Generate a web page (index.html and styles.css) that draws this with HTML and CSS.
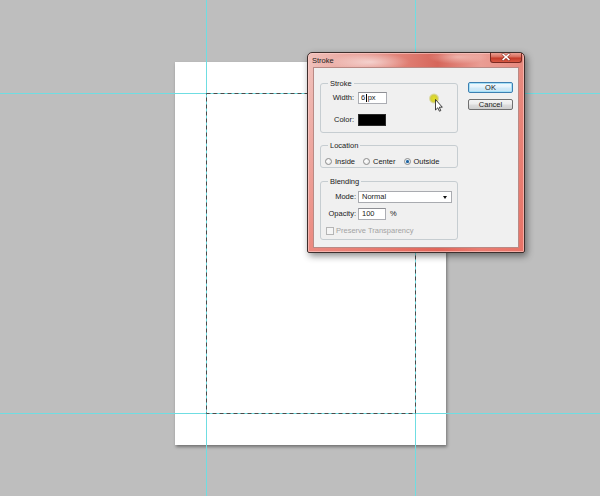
FILE: index.html
```html
<!DOCTYPE html>
<html>
<head>
<meta charset="utf-8">
<title>Stroke</title>
<link rel="stylesheet" href="styles.css">
</head>
<body>
<div class="canvas">
  <div class="doc"></div>
  <svg class="overlay" width="600" height="496" viewBox="0 0 600 496">
    <g stroke="#6fdde2" stroke-width="1">
      <line x1="206.5" y1="0" x2="206.5" y2="496"/>
      <line x1="415.5" y1="0" x2="415.5" y2="496"/>
      <line x1="0" y1="93.5" x2="600" y2="93.5"/>
      <line x1="0" y1="413.5" x2="600" y2="413.5"/>
    </g>
    <rect x="206.5" y="93.5" width="209" height="320" fill="none" stroke="#4b4b4b" stroke-width="1" stroke-dasharray="4 3"/>
  </svg>

  <div class="dialog">
    <div class="titlebar">
      <span class="title">Stroke</span>
      <span class="close">
        <svg width="32" height="10" viewBox="0 0 32 10">
          <path d="M13 2.2 L19 7.6 M19 2.2 L13 7.6" stroke="#6a1a12" stroke-width="2.8" stroke-linecap="round" opacity="0.55"/>
          <path d="M13 2.2 L19 7.6 M19 2.2 L13 7.6" stroke="#ffffff" stroke-width="1.5" stroke-linecap="round"/>
        </svg>
      </span>
    </div>
    <div class="client">
      <div class="groups">
        <fieldset class="group g-stroke">
          <legend>Stroke</legend>
          <div class="rows rows-stroke">
            <span class="lbl">Width:</span>
            <span class="field field-w"><span>6</span><span class="caret"></span><span class="unit">px</span></span>
            <span class="lbl">Color:</span>
            <span class="swatch"></span>
          </div>
        </fieldset>
        <fieldset class="group g-loc">
          <legend>Location</legend>
          <div class="radios">
            <span class="opt"><span class="radio"></span>Inside</span>
            <span class="opt"><span class="radio"></span>Center</span>
            <span class="opt"><span class="radio checked"></span>Outside</span>
          </div>
        </fieldset>
        <fieldset class="group g-blend">
          <legend>Blending</legend>
          <div class="rows rows-blend">
            <span class="lbl">Mode:</span>
            <span class="select"><span>Normal</span><span class="arrow"></span></span>
            <span class="lbl">Opacity:</span>
            <span class="op"><span class="field field-o">100</span><span class="pct">%</span></span>
            <span class="check-row"><span class="checkbox"></span><span class="dis">Preserve Transparency</span></span>
          </div>
        </fieldset>
      </div>
      <div class="buttons">
        <span class="btn btn-default">OK</span>
        <span class="btn">Cancel</span>
      </div>
    </div>
  </div>

  <svg class="cursor" width="16" height="20" viewBox="0 0 16 20">
    <defs>
      <radialGradient id="hl" cx="50%" cy="50%" r="50%">
        <stop offset="0%" stop-color="#e6e21c"/>
        <stop offset="60%" stop-color="#cfcb2a" stop-opacity="0.9"/>
        <stop offset="100%" stop-color="#b9b54a" stop-opacity="0"/>
      </radialGradient>
    </defs>
    <circle cx="5" cy="5.5" r="5.5" fill="url(#hl)"/>
    <path d="M6.5 6.5 L6.5 17 L8.8 14.8 L10.4 18.2 L11.8 17.6 L10.3 14.2 L13.3 14.2 Z" fill="#fff" stroke="#111" stroke-width="0.8" stroke-linejoin="round"/>
  </svg>
</div>
</body>
</html>
```

FILE: styles.css
```css
* { box-sizing: border-box; }
html, body { margin: 0; padding: 0; }
body {
  width: 600px;
  height: 496px;
  overflow: hidden;
  background: #bebebe;
  font-family: "Liberation Sans", Arial, sans-serif;
  font-size: 7.5px;
  color: #1a1a1a;
}
.canvas { position: relative; width: 600px; height: 496px; }

.doc {
  position: absolute;
  left: 175px;
  top: 62px;
  width: 271px;
  height: 383px;
  background: #ffffff;
  box-shadow: 1px 2px 3px rgba(0, 0, 0, 0.4);
}
.overlay { position: absolute; left: 0; top: 0; }

/* dialog window */
.dialog {
  position: absolute;
  left: 307px;
  top: 52px;
  width: 218px;
  height: 201px;
  border: 1px solid #3e2f2d;
  border-radius: 5px 5px 2px 2px;
  padding: 0 5px 4px 5px;
  display: flex;
  flex-direction: column;
  background:
    radial-gradient(ellipse 40px 9px at 62px 9px, rgba(255,255,255,0.55), rgba(255,255,255,0)),
    radial-gradient(ellipse 30px 7px at 150px 4px, rgba(255,230,225,0.5), rgba(255,255,255,0)),
    linear-gradient(to bottom, rgba(255,255,255,0) 0, rgba(255,255,255,0) 16px, rgba(232,100,88,0.6) 100%),
    linear-gradient(to right, #f0c0ba 0%, #e8a098 25%, #e07e73 45%, #d6665b 60%, #ea9d94 80%, #e7897e 100%);
  box-shadow: 2px 3px 7px rgba(0, 0, 0, 0.45), inset 0 0 0 1px rgba(255, 210, 205, 0.6);
}
.titlebar {
  height: 14px;
  margin: 0 -3px 0 -5px;
  padding-left: 4px;
  display: flex;
  justify-content: space-between;
  align-items: flex-start;
}
.title { line-height: 15px; color: #1c1c1c; }
.close {
  width: 32px;
  height: 10px;
  display: block;
  border: 1px solid #7a2a22;
  border-top: none;
  border-radius: 0 0 3px 3px;
  background: linear-gradient(to bottom, #eba193 0%, #d86a5a 45%, #c23a28 55%, #d95a45 100%);
  overflow: hidden;
}
.close svg { display: block; margin: -1px 0 0 -1px; }

.client {
  flex: 1;
  border: 1px solid #b98a85;
  background: #f0f0f0;
  display: flex;
  padding: 11px 0 0 6px;
}

.groups { width: 138px; display: flex; flex-direction: column; }

fieldset.group {
  margin: 0;
  padding: 0;
  min-width: 0;
  border: 1px solid #c6cdd1;
  border-radius: 3px;
}
.group legend {
  margin-left: 7px;
  padding: 0 2px;
  line-height: 9px;
  font-size: 7.5px;
  color: #1a1a1a;
}
.g-loc { margin-top: 8px !important; }
.g-blend { margin-top: 9px !important; }

.rows { display: grid; align-items: center; }
.rows-stroke {
  grid-template-columns: 33px auto;
  column-gap: 4px;
  row-gap: 10px;
  padding: 4px 0 6px 0;
}
.rows-blend {
  grid-template-columns: 35px auto;
  column-gap: 2px;
  row-gap: 5px;
  padding: 5px 0 3px 0;
}
.lbl { text-align: right; line-height: 12px; white-space: nowrap; }

.field {
  display: flex;
  align-items: center;
  height: 12px;
  background: #ffffff;
  border: 1px solid #abadb3;
  border-top-color: #8e8f94;
  padding-left: 2px;
  line-height: 10px;
}
.field-w { width: 29px; }
.caret { width: 1px; height: 8px; background: #000; margin-left: 0.5px; }
.unit { margin-left: 1px; }
.swatch {
  display: block;
  width: 28px;
  height: 12px;
  background: #000000;
  border: 1px solid #2a2a2a;
}

.radios {
  display: flex;
  align-items: center;
  height: 9px;
  margin: 7px 0 1px 4px;
  gap: 8px;
}
.opt { display: flex; align-items: center; gap: 3px; line-height: 9px; }
.radio {
  width: 7px;
  height: 7px;
  border-radius: 50%;
  border: 1px solid #8c8c8c;
  background: radial-gradient(circle at 40% 40%, #ffffff 0%, #e2e2e2 100%);
  position: relative;
}
.radio.checked::after {
  content: "";
  position: absolute;
  left: 1px;
  top: 1px;
  width: 3px;
  height: 3px;
  border-radius: 50%;
  background: #1d5f9c;
  box-shadow: 0 0 1px #5fb3ea;
}

.select {
  width: 94px;
  height: 12px;
  background: #ffffff;
  border: 1px solid #a9abb0;
  display: flex;
  align-items: center;
  justify-content: space-between;
  padding: 0 4px 0 3px;
  line-height: 10px;
}
.arrow {
  width: 0;
  height: 0;
  border-left: 2.5px solid transparent;
  border-right: 2.5px solid transparent;
  border-top: 3px solid #111;
}
.op { display: flex; align-items: center; gap: 4px; }
.field-o { width: 28px; padding-left: 3px; }
.pct { line-height: 12px; }

.check-row {
  grid-column: 1 / span 2;
  display: flex;
  align-items: center;
  gap: 2px;
  height: 10px;
  margin: 1px 0 0 5px;
}
.checkbox {
  width: 8px;
  height: 8px;
  border: 1px solid #b5b5b5;
  background: #f5f5f5;
}
.dis { color: #a3a3a3; line-height: 10px; }

.buttons {
  margin-left: 10px;
  padding-top: 3px;
  display: flex;
  flex-direction: column;
  gap: 6px;
}
.btn {
  width: 45px;
  height: 11px;
  border: 1px solid #707070;
  border-radius: 2px;
  background: linear-gradient(to bottom, #f4f4f4 0%, #ebebeb 48%, #dddddd 52%, #cfcfcf 100%);
  text-align: center;
  line-height: 9px;
  color: #1c1c1c;
}
.btn-default {
  border-color: #3c7fb1;
  box-shadow: inset 0 0 0 1px #a6e0f7;
  background: linear-gradient(to bottom, #f2f9fd 0%, #e4f2fb 48%, #d2ebf9 52%, #c6e4f5 100%);
}

.cursor { position: absolute; left: 429px; top: 93px; }
```
